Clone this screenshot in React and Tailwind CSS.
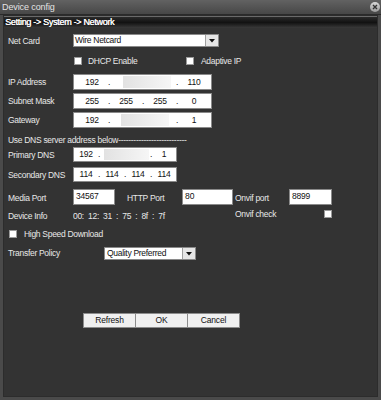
import React from "react";

const F = { fontFamily: '"Liberation Sans", Arial, sans-serif' };

function Label({ children, className = "" }) {
  return <div className={"w-[69px] shrink-0 pl-[4px] whitespace-nowrap text-[8.5px] tracking-[-0.3px] leading-[12px] text-[#e8e8e8] " + className}>{children}</div>;
}

function Check({ className = "" }) {
  return <div className={"w-[8px] h-[8px] bg-white border border-[#9a9a9a] shrink-0 " + className}></div>;
}

function Arrow() {
  return (
    <div className="absolute right-0 top-0 bottom-0 w-[13px] bg-[#e6e6e6] border-l border-[#a0a0a0] flex items-center justify-center">
      <svg width="6" height="4" viewBox="0 0 6 4"><path d="M0 0H6L3 3.5Z" fill="#111" /></svg>
    </div>
  );
}

function IPBox({ vals, blur, blurLeft, blurWidth }) {
  return (
    <div className="relative w-[139px] h-[16px] bg-white border border-[#8a8a8a] flex items-center pl-[5px] text-[8.5px] tracking-[-0.2px] text-[#111]">
      {vals.map((v, i) => (
        <React.Fragment key={i}>
          {i > 0 && <div className="w-[8px] text-center">.</div>}
          <div className="w-[26px] text-center">{v}</div>
        </React.Fragment>
      ))}
      {blur && <div className="absolute top-[1px] bottom-[1px] bg-gradient-to-r from-[#e2e2e2] to-[#f6f6f6]" style={{ left: blurLeft, width: blurWidth }}></div>}
    </div>
  );
}

function DNSBox({ vals, blur, blurLeft, blurWidth }) {
  return (
    <div className="relative w-[104px] h-[15px] bg-white border border-[#8a8a8a] flex items-center pl-[3px] text-[8.5px] tracking-[-0.2px] text-[#111]">
      {vals.map((v, i) => (
        <React.Fragment key={i}>
          {i > 0 && <div className="w-[8px] text-center">.</div>}
          <div className="w-[18px] text-center">{v}</div>
        </React.Fragment>
      ))}
      {blur && <div className="absolute top-[1px] bottom-[1px] bg-gradient-to-r from-[#e2e2e2] to-[#f6f6f6]" style={{ left: blurLeft, width: blurWidth }}></div>}
    </div>
  );
}

const T = "text-[8.5px] tracking-[-0.3px] text-[#e8e8e8] whitespace-nowrap";

export default function App() {
  return (
    <div className="w-[381px] h-[400px] bg-[#4a4a4a] flex flex-col overflow-hidden" style={F}>
      {/* Title bar */}
      <div className="h-[14px] shrink-0 flex items-center justify-between bg-gradient-to-b from-[#626262] to-[#474747] pl-[2px] pr-[1px]">
        <span className="text-[9px] leading-[12px] tracking-[-0.1px] text-[#e4e4e4]">Device config</span>
        <div className="w-[10px] h-[10px] rounded-full bg-gradient-to-b from-[#d8d8d8] to-[#9a9a9a] flex items-center justify-center">
          <svg width="6" height="6" viewBox="0 0 6 6"><path d="M1 1L5 5M5 1L1 5" stroke="#333" strokeWidth="1.4" /></svg>
        </div>
      </div>
      {/* Frame body */}
      <div className="flex-1 flex flex-col px-[3px] pb-[3px] border-t border-[#2a2a2a]">
        <div className="flex-1 flex flex-col bg-[#333333] border border-[#2c2c2c]">
          {/* Breadcrumb */}
          <div className="h-[12px] shrink-0 border-t border-[#6a6a6a] bg-gradient-to-b from-[#2a2a2a] via-[#121212] to-[#3a3a3a] flex items-center pl-[1px]">
            <span className="text-[9px] leading-[11px] tracking-[-0.3px] text-white [text-shadow:0.4px_0_0_#fff]">Setting -&gt; System -&gt; Network</span>
          </div>

          <div className="flex flex-col">
            {/* Net card */}
            <div className="flex items-center mt-[6px] h-[13px]">
              <Label className="pt-[1px]">Net Card</Label>
              <div className="relative w-[146px] h-[13px] bg-white border border-[#8a8a8a] text-[8.5px] tracking-[-0.3px] leading-[11px] pl-[1px] text-[#111]">
                Wire Netcard
                <Arrow />
              </div>
            </div>
            {/* DHCP */}
            <div className={"flex items-center mt-[10px] h-[8px] " + T}>
              <div className="w-[69px] shrink-0"></div>
              <Check className="ml-[1px]" />
              <span className="ml-[6px] w-[98px] shrink-0">DHCP Enable</span>
              <Check />
              <span className="ml-[7px]">Adaptive IP</span>
            </div>
            {/* IP */}
            <div className="flex items-center mt-[9px] h-[16px]">
              <Label>IP Address</Label>
              <IPBox vals={["192", "", "", "110"]} blur blurLeft={49} blurWidth={48} />
            </div>
            <div className="flex items-center mt-[3px] h-[16px]">
              <Label>Subnet Mask</Label>
              <IPBox vals={["255", "255", "255", "0"]} />
            </div>
            <div className="flex items-center mt-[3px] h-[16px]">
              <Label>Gateway</Label>
              <IPBox vals={["192", "", "", "1"]} blur blurLeft={47} blurWidth={48} />
            </div>
            {/* DNS */}
            <div className={"mt-[6px] h-[12px] pl-[4px] leading-[12px] " + T}>
              Use DNS server address below---------------------------
            </div>
            <div className="flex items-center mt-[1px] h-[15px]">
              <Label>Primary DNS</Label>
              <DNSBox vals={["192", "", "", "1"]} blur blurLeft={30} blurWidth={45} />
            </div>
            <div className="flex items-center mt-[5px] h-[15px]">
              <Label>Secondary DNS</Label>
              <DNSBox vals={["114", "114", "114", "114"]} />
            </div>
            {/* Ports */}
            <div className="flex items-center mt-[7px] h-[16px]">
              <Label className="pt-[2px]">Media Port</Label>
              <div className="w-[42px] shrink-0 h-[16px] bg-white border border-[#8a8a8a] text-[8.5px] tracking-[-0.2px] leading-[12px] pl-[2px] text-[#111]">34567</div>
              <div className={"ml-[12px] w-[55px] shrink-0 pt-[3px] " + T}>HTTP Port</div>
              <div className="w-[51px] shrink-0 h-[16px] bg-white border border-[#8a8a8a] text-[8.5px] leading-[12px] pl-[2px] text-[#111]">80</div>
              <div className={"ml-[2px] w-[54px] shrink-0 pt-[2px] " + T}>Onvif port</div>
              <div className="w-[43px] shrink-0 h-[16px] bg-white border border-[#8a8a8a] text-[8.5px] tracking-[-0.2px] leading-[12px] pl-[2px] text-[#111]">8899</div>
            </div>
            {/* Device info */}
            <div className="grid grid-cols-[69px_162px_89px_8px] items-center mt-[5px] h-[12px]">
              <Label>Device Info</Label>
              <div className={"overflow-hidden " + T}>00: &nbsp;12: &nbsp;31 &nbsp;: &nbsp;75 &nbsp;: &nbsp;8f &nbsp;: &nbsp;7f</div>
              <div className={"-mt-[3px] overflow-hidden " + T}>Onvif check</div>
              <Check className="-mt-[4px]" />
            </div>
            {/* High speed */}
            <div className={"flex items-center mt-[6px] h-[12px] pl-[5px] " + T}>
              <Check />
              <span className="ml-[7px]">High Speed Download</span>
            </div>
            {/* Transfer policy */}
            <div className="flex items-center mt-[7px] h-[13px]">
              <div className={"w-[100px] shrink-0 pl-[4px] " + T}>Transfer Policy</div>
              <div className="relative w-[92px] h-[13px] bg-white border border-[#8a8a8a] text-[8.5px] tracking-[-0.3px] leading-[11px] pl-[2px] text-[#111]">
                Quality Preferred
                <Arrow />
              </div>
            </div>
            {/* Buttons */}
            <div className="flex mt-[53px] pl-[79px]">
              {["Refresh", "OK", "Cancel"].map((t) => (
                <div key={t} className="w-[53px] h-[15px] bg-[#f0f0f0] border border-[#8c8c8c] -ml-px first:ml-0 flex items-center justify-center text-[8.5px] tracking-[-0.2px] text-[#111]">
                  {t}
                </div>
              ))}
            </div>
          </div>
        </div>
      </div>
    </div>
  );
}
